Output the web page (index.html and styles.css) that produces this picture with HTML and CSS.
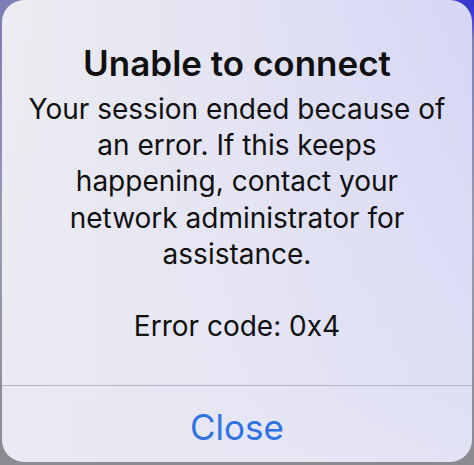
FILE: index.html
```html
<!DOCTYPE html>
<html lang="en">
<head>
<meta charset="utf-8">
<link rel="stylesheet" href="styles.css">
<title>Unable to connect</title>
</head>
<body>
<div class="backdrop">
  <div class="alert">
    <div class="content">
      <h1 class="title">Unable to connect</h1>
      <p class="message">Your session ended because of<br>an error. If this keeps<br>happening, contact your<br>network administrator for<br>assistance.</p>
      <p class="message code">Error code: 0x4</p>
    </div>
    <div class="actions">
      <button class="action">Close</button>
    </div>
  </div>
</div>
</body>
</html>
```
FILE: styles.css
```css
html, body {
  margin: 0;
  padding: 0;
}
body {
  width: 474px;
  height: 465px;
  overflow: hidden;
  font-family: Inter, "Noto Sans", "Liberation Sans", sans-serif;
}
.backdrop {
  width: 474px;
  height: 465px;
  background:
    radial-gradient(circle at 100% 0%, #3434c8 0, #3a3ad0 14px, rgba(60,60,200,0) 40px),
    linear-gradient(180deg, #7c7cb6 0%, #9a9ab4 50%, #8a8a90 100%);
  padding: 0 2px 3px 2px;
  box-sizing: border-box;
}
.alert {
  height: 462px;
  border-radius: 22px;
  background:
    linear-gradient(180deg, rgba(236,236,244,0.0) 0%, rgba(232,232,244,0.5) 85%, rgba(232,232,244,0.7) 100%),
    linear-gradient(90deg, #ececf1 0%, #e4e4f3 45%, #d6d6f6 100%);
  display: flex;
  flex-direction: column;
  overflow: hidden;
}
.content {
  flex: 1;
  text-align: center;
  color: #101010;
  padding-top: 42px;
}
.title {
  margin: 0;
  font-size: 35px;
  font-weight: 600;
  line-height: 42px;
  letter-spacing: 0;
}
.message {
  margin: 7px 0 0;
  font-size: 28px;
  font-weight: 400;
  line-height: 36.2px;
}
.code {
  margin-top: 36px;
}
.actions {
  height: 76px;
  border-top: 1px solid #b4b4c4;
  display: flex;
}
.action {
  flex: 1;
  border: 0;
  background: transparent;
  font-family: inherit;
  font-size: 35px;
  color: #2f72e4;
  padding: 6px 0 0;
}
```
